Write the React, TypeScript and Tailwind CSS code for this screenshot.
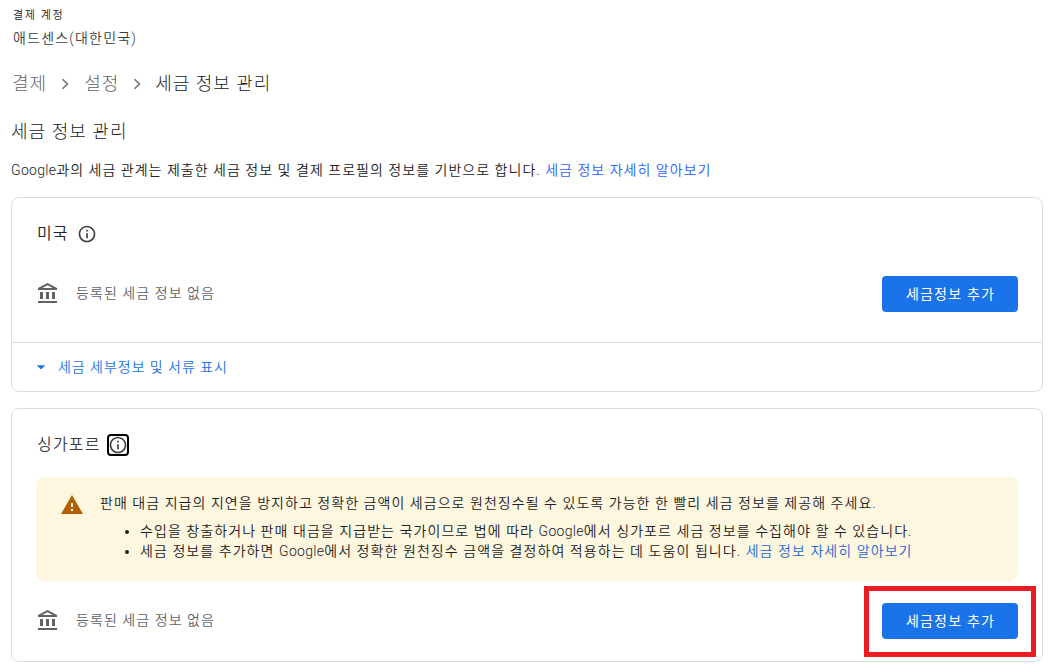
import React from 'react';

interface IconProps {
	path: string;
	className: string;
}

const ICONS = {
	chevron: 'M10 6L8.59 7.41 13.17 12l-4.58 4.59L10 18l6-6z',
	info: 'M11 7h2v2h-2zm0 4h2v6h-2zm1-9C6.48 2 2 6.48 2 12s4.48 10 10 10 10-4.48 10-10S17.52 2 12 2zm0 18c-4.41 0-8-3.59-8-8s3.59-8 8-8 8 3.59 8 8-3.59 8-8 8z',
	bank: 'M7 10H4v7h3v-7zm6 0h-3v7h3v-7zm8 9H2v2h19v-2zm-2-9h-3v7h3v-7zm-7.500-6.740L16.710 6H6.290l5.210-2.740m0-2.260L2 6v2h19V6l-9.500-5z',
	dropDown: 'M7 10l5 5 5-5z',
	warning: 'M1 21h22L12 2 1 21zm12-3h-2v-2h2v2zm0-4h-2v-4h2v4z',
};

const Icon: React.FC<IconProps> = ({ path, className }) => (
	<svg viewBox="0 0 24 24" fill="currentColor" className={`shrink-0 ${className}`}>
		<path d={path} />
	</svg>
);

// Latin text keeps its natural spacing inside the wider Korean text
const Google: React.FC = () => <span className="tracking-[0.3px]">Google</span>;

const AddTaxButton: React.FC = () => (
	<button className="h-9 w-[136px] rounded bg-[#1a73e8] pl-px text-[14px] leading-9 font-normal tracking-[1.2px] text-white hover:bg-[#185abc]">
		세금정보 추가
	</button>
);

const TaxStatus: React.FC = () => (
	<div className="flex items-center gap-4 text-[#5f6368]">
		<Icon path={ICONS.bank} className="h-6 w-6" />
		<span className="pb-[3px] text-[14px] leading-5 tracking-[1.07px]">등록된 세금 정보 없음</span>
	</div>
);

const App: React.FC = () => {
	return (
		<div className="h-[670px] w-[1050px] overflow-hidden bg-white pr-[7px] pl-[11px] font-[Roboto,'Noto_Sans_CJK_KR',sans-serif] font-[350] tracking-[1.03px] text-[#202124]">
			{/* Account */}
			<div className="pt-2 pl-[2px]">
				<div className="text-[11px] leading-4 tracking-[1.6px]">결제 계정</div>
				<div className="mt-1 text-[14px] leading-5 tracking-[1.2px] text-[#3c4043]">애드센스(대한민국)</div>
			</div>

			{/* Breadcrumb */}
			<nav className="mt-6 flex h-6 items-center text-[18px] leading-6 font-light tracking-[1px] text-[#5f6368]">
				<a href="#" className="pl-px">
					결제
				</a>
				<Icon path={ICONS.chevron} className="mx-[7px] h-[22px] w-[22px] text-[#80868b]" />
				<a href="#" className="pl-px">
					설정
				</a>
				<Icon path={ICONS.chevron} className="mx-[7px] h-[22px] w-[22px] text-[#80868b]" />
				<span className="text-[#202124]">세금 정보 관리</span>
			</nav>

			<h1 className="mt-6 text-[18px] leading-6 font-light tracking-[1.05px]">세금 정보 관리</h1>
			<p className="mt-4 text-[14px] leading-5 whitespace-nowrap">
				<Google />
				과의 세금 관계는 제출한 세금 정보 및 결제 프로필의 정보를 기반으로 합니다.{' '}
				<a href="#" className="text-[#2962ff]">
					세금 정보 자세히 알아보기
				</a>
			</p>

			{/* United States */}
			<section className="mt-[17px] h-[195px] rounded-lg border border-[#dadce0]">
				<div className="h-[145px] border-b border-[#dadce0] px-6 pt-6">
					<h2 className="flex h-6 items-center gap-2 pl-px text-[16px] leading-6">
						미국
						<Icon path={ICONS.info} className="h-5 w-5 text-[#3c4043]" />
					</h2>
					<div className="mt-[30px] flex items-center justify-between">
						<TaxStatus />
						<AddTaxButton />
					</div>
				</div>
				<button className="flex h-12 items-center gap-[7px] pl-[19px] text-[14px] tracking-[0.97px] text-[#1a73e8]">
					<Icon path={ICONS.dropDown} className="h-5 w-5" />
					세금 세부정보 및 서류 표시
				</button>
			</section>

			{/* Singapore */}
			<section className="mt-4 h-[254px] rounded-lg border border-[#dadce0] px-6 pt-6">
				<h2 className="flex h-6 items-center gap-[6px] pl-px text-[16px] leading-6 tracking-[1.2px] text-[#3c4043]">
					싱가포르
					<span className="rounded border-2 border-black">
						<Icon path={ICONS.info} className="-m-px h-5 w-5" />
					</span>
				</h2>
				<div className="mt-5 flex h-[104px] gap-4 rounded-lg bg-[#fef7e0] pt-4 pl-6 text-[14px] leading-5 tracking-[1.05px] whitespace-nowrap">
					<Icon path={ICONS.warning} className="h-6 w-6 text-[#b06000]" />
					<div>
						<p>
							판매 대금 지급의 지연을 방지하고 정확한 금액이 세금으로 원천징수될 수 있도록 가능한 한 빨리 세금 정보를 제공해 주세요.
						</p>
						<ul className="mt-2 list-disc pl-10 tracking-[1.07px]">
							<li>
								수입을 창출하거나 판매 대금을 지급받는 국가이므로 법에 따라 <Google />
								에서 싱가포르 세금 정보를 수집해야 할 수 있습니다.
							</li>
							<li>
								세금 정보를 추가하면 <Google />
								에서 정확한 원천징수 금액을 결정하여 적용하는 데 도움이 됩니다.{' '}
								<a href="#" className="text-[#1967d2]">
									세금 정보 자세히 알아보기
								</a>
							</li>
						</ul>
					</div>
				</div>
				<div className="mt-[22px] flex items-center justify-between">
					<TaxStatus />
					<div className="relative">
						<AddTaxButton />
						<div className="pointer-events-none absolute -top-[17px] -right-[18px] h-[71px] w-[172px] border-[5px] border-[#ed1c24]" />
					</div>
				</div>
			</section>
		</div>
	);
};

export default App;
